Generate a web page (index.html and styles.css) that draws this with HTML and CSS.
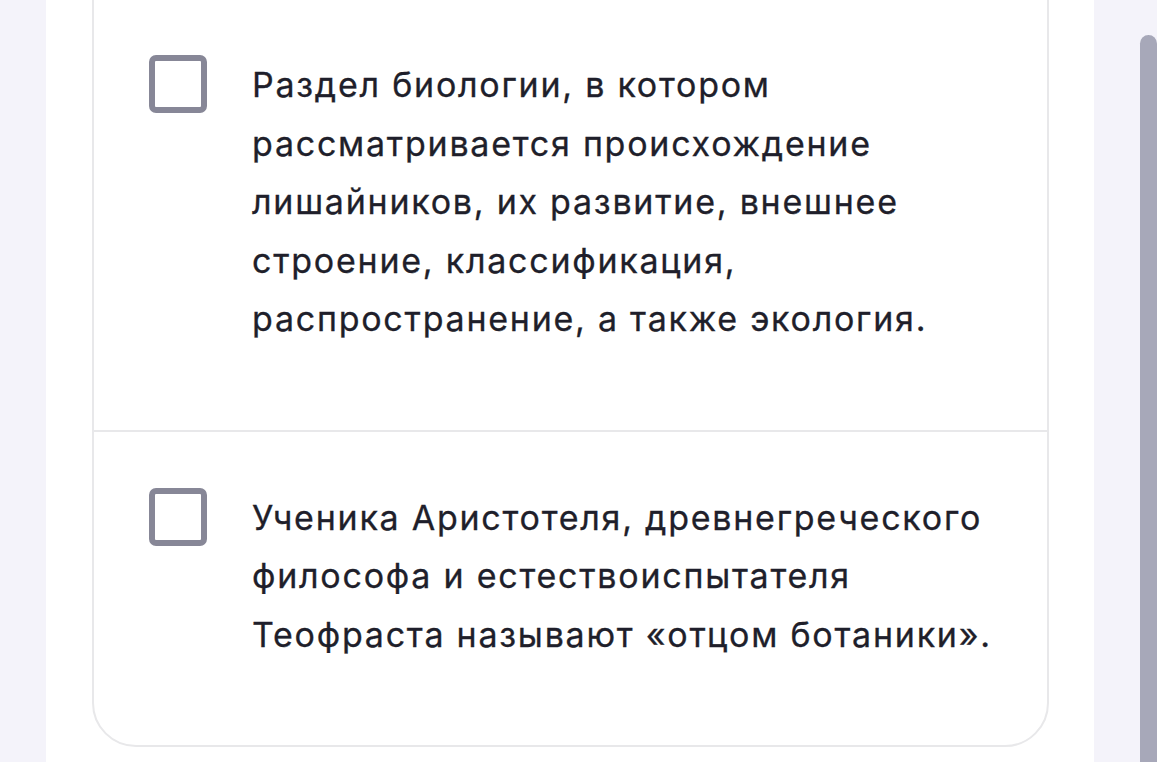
FILE: index.html
```html
<!DOCTYPE html>
<html lang="ru">
<head>
<meta charset="utf-8">
<link rel="stylesheet" href="styles.css">
</head>
<body>
<div class="page">
  <main class="panel">
    <div class="card">
      <label class="option">
        <span class="box"></span>
        <span class="text">Раздел биологии, в котором рассматривается происхождение лишайников, их развитие, внешнее строение, классификация, распространение, а также экология.</span>
      </label>
      <label class="option">
        <span class="box"></span>
        <span class="text">Ученика Аристотеля, древнегреческого философа и естествоиспытателя Теофраста называют «отцом ботаники».</span>
      </label>
    </div>
  </main>
  <div class="scrollbar"><div class="thumb"></div></div>
</div>
</body>
</html>
```
FILE: styles.css
```css
html, body {
  margin: 0;
  padding: 0;
  height: 100%;
  overflow: hidden;
  background: #f4f3fa;
}
.page {
  display: flex;
  height: 762px;
  padding-left: 46px;
  box-sizing: border-box;
}
.panel {
  width: 1048px;
  background: #ffffff;
  padding: 0 45px 0 46px;
  box-sizing: border-box;
}
.card {
  margin-top: -2px;
  border: 2px solid #e8e8ea;
  border-radius: 0 0 44px 44px;
  background: #fff;
}
.option {
  display: flex;
  align-items: flex-start;
  gap: 45px;
  padding: 56px 46px 81px 55px;
}
.option + .option {
  border-top: 2px solid #e8e8ea;
  padding-top: 57px;
}
.box {
  flex: none;
  width: 58px;
  height: 58px;
  margin-top: -1px;
  box-sizing: border-box;
  border: 6px solid #878797;
  border-radius: 7px;
  background: #fff;
}
.text {
  font-family: Inter, "Noto Sans", sans-serif;
  font-size: 34px;
  line-height: 58.5px;
  letter-spacing: 1.75px;
  color: #1f1f2b;
  font-weight: 400;
  -webkit-text-stroke: 0.3px #1f1f2b;
}
.scrollbar {
  margin-left: 46px;
  width: 17px;
  padding-top: 35px;
}
.thumb {
  height: 760px;
  background: #a7a8b9;
  border-radius: 9px 9px 0 0;
}
```
